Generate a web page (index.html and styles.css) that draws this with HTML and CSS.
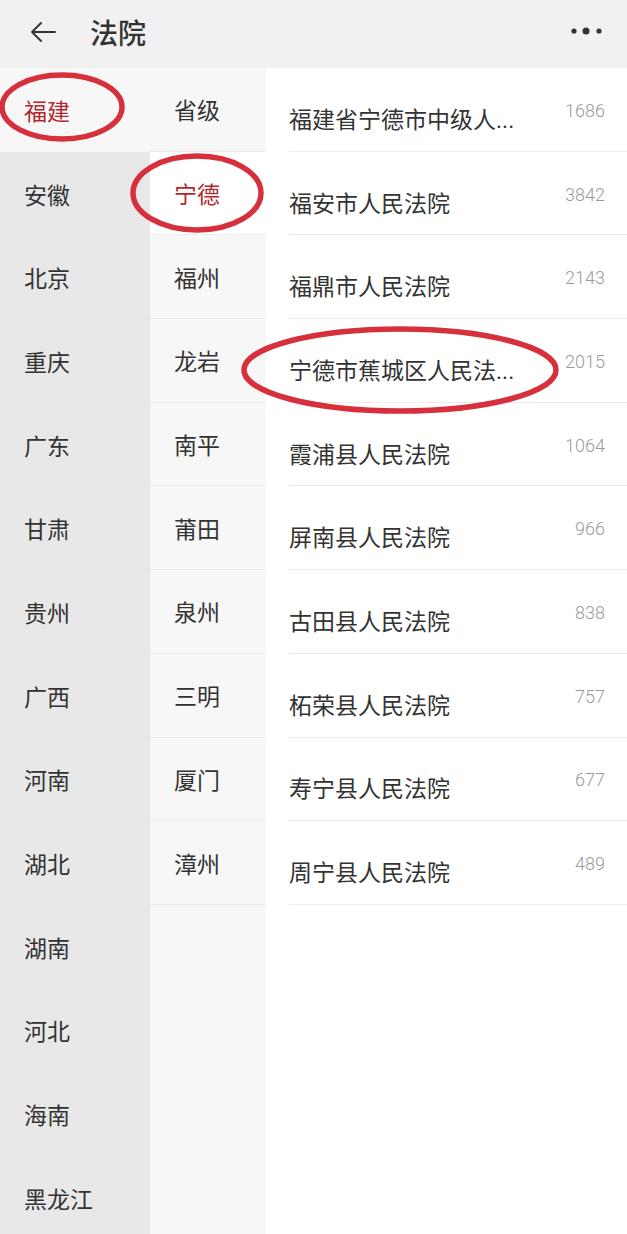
FILE: index.html
```html
<!DOCTYPE html>
<html lang="zh-CN">
<head>
    <meta charset="UTF-8">
    <meta name="viewport" content="width=device-width, initial-scale=1.0">
    <title>法院</title>
    <link rel="stylesheet" href="styles.css">
</head>
<body>
    <div class="page">
        <header class="topbar">
            <svg class="back" width="26" height="20" viewBox="0 0 26 20">
                <path d="M25 10H2M11 1L2 10l9 9" fill="none" stroke="#333" stroke-width="1.8" stroke-linecap="round" stroke-linejoin="round"/>
            </svg>
            <h1>法院</h1>
            <svg class="more" width="32" height="10" viewBox="0 0 32 10">
                <circle cx="3" cy="5" r="2.6" fill="#333"/>
                <circle cx="15" cy="5" r="3.5" fill="#333"/>
                <circle cx="28" cy="5" r="2.6" fill="#333"/>
            </svg>
        </header>

        <main class="picker">
            <ul class="col col-province">
                <li class="active">福建</li>
                <li>安徽</li>
                <li>北京</li>
                <li>重庆</li>
                <li>广东</li>
                <li>甘肃</li>
                <li>贵州</li>
                <li>广西</li>
                <li>河南</li>
                <li>湖北</li>
                <li>湖南</li>
                <li>河北</li>
                <li>海南</li>
                <li>黑龙江</li>
            </ul>

            <ul class="col col-city">
                <li>省级</li>
                <li class="active">宁德</li>
                <li>福州</li>
                <li>龙岩</li>
                <li>南平</li>
                <li>莆田</li>
                <li>泉州</li>
                <li>三明</li>
                <li>厦门</li>
                <li>漳州</li>
            </ul>

            <!-- long names come already shortened by the app -->
            <ul class="col col-court">
                <li><span class="name">福建省宁德市中级人...</span><span class="count">1686</span></li>
                <li><span class="name">福安市人民法院</span><span class="count">3842</span></li>
                <li><span class="name">福鼎市人民法院</span><span class="count">2143</span></li>
                <li><span class="name">宁德市蕉城区人民法...</span><span class="count">2015</span></li>
                <li><span class="name">霞浦县人民法院</span><span class="count">1064</span></li>
                <li><span class="name">屏南县人民法院</span><span class="count">966</span></li>
                <li><span class="name">古田县人民法院</span><span class="count">838</span></li>
                <li><span class="name">柘荣县人民法院</span><span class="count">757</span></li>
                <li><span class="name">寿宁县人民法院</span><span class="count">677</span></li>
                <li><span class="name">周宁县人民法院</span><span class="count">489</span></li>
            </ul>
        </main>

        <!-- hand-drawn marks on top of the screenshot -->
        <svg class="marks" width="627" height="1234" viewBox="0 0 627 1234">
            <ellipse cx="62" cy="107" rx="60" ry="32"/>
            <ellipse cx="197" cy="193" rx="64" ry="37"/>
            <ellipse cx="400" cy="370" rx="156" ry="41"/>
        </svg>
    </div>
</body>
</html>
```

FILE: styles.css
```css
body {
    margin: 0;
    font-family: Roboto, "Noto Sans CJK SC", sans-serif;
    color: #333;
    background: #fff;
    overflow: hidden;
}

.page {
    position: relative;
    height: 1234px;
    overflow: hidden;
}

.topbar {
    display: flex;
    align-items: center;
    height: 68px;
    padding: 0 24px 4px 30px;
    box-sizing: border-box;
    background: #f1f1f1;
}

.topbar h1 {
    margin: 0 0 0 34px;
    font-size: 28px;
    font-weight: 500;
    color: #333;
    flex: 1;
}

.more {
    margin-top: -2px;
}

.picker {
    display: flex;
    align-items: flex-start;
    height: calc(100% - 68px);
}

.col {
    list-style: none;
    margin: 0;
    padding: 0;
}

.col li {
    display: flex;
    align-items: center;
    height: 83.7px;
    box-sizing: border-box;
    font-size: 23px;
}

.col-province {
    width: 150px;
    height: 100%;
    background: #e8e8e8;
}

.col-province li {
    padding-left: 24px;
}

.col-city {
    width: 116px;
    height: 100%;
    background: #f7f7f7;
}

.col-city li {
    padding-left: 24px;
    border-bottom: 1px solid #ececec;
}

.col-province li.active {
    background: #f7f7f7;
    color: #b3272e;
}

.col-city li.active {
    background: #fff;
    color: #b3272e;
}

.col-court {
    flex: 1;
    height: 100%;
    background: #fff;
}

.col-court li {
    margin-left: 23px;
    padding-right: 22px;
    border-bottom: 1px solid #ececec;
    justify-content: space-between;
}

.col-court .name {
    padding-top: 17px;
    white-space: nowrap;
}

.col-court .count {
    font-size: 18px;
    font-weight: 300;
    color: #9b9b9b;
    margin-top: 2px;
}

.marks {
    position: absolute;
    top: 0;
    left: 0;
    pointer-events: none;
}

.marks ellipse {
    fill: none;
    stroke: #d6303c;
    stroke-width: 5.5;
}
```
